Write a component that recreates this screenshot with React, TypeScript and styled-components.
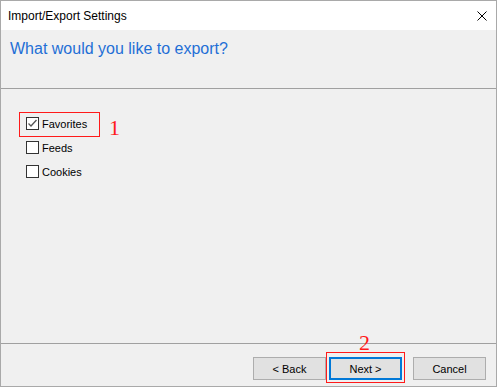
import React, { useState } from 'react';
import styled, { createGlobalStyle } from 'styled-components';

const GlobalStyle = createGlobalStyle`
  body {
    margin: 0;
    background: #ffffff;
  }
`;

const Window = styled.div`
  width: 497px;
  height: 387px;
  box-sizing: border-box;
  border: 1px solid #a9a9a9;
  background: #f0f0f0;
  display: flex;
  flex-direction: column;
  font-family: 'Liberation Sans', Arial, sans-serif;
  color: #000;
`;

const TitleBar = styled.div`
  height: 29px;
  flex-shrink: 0;
  background: #ffffff;
  display: flex;
  align-items: center;
  justify-content: space-between;
  padding: 0 8px 0 7px;
  font-size: 12px;
`;

const CloseButton = styled.div`
  width: 10px;
  height: 10px;
  display: flex;
  margin-top: 1px;
  margin-right: 1px;
`;

const Header = styled.div`
  height: 59px;
  flex-shrink: 0;
  box-sizing: border-box;
  padding: 10px 9px 0;
  border-bottom: 1px solid #a0a0a0;
  color: #1f6fd6;
  font-size: 16px;
`;

const Content = styled.div`
  flex: 1;
  padding: 28px 25px 0;
  display: flex;
  flex-direction: column;
  gap: 11px;
`;

const Row = styled.div`
  position: relative;
  display: flex;
  align-items: center;
  gap: 3px;
  height: 13px;
  font-size: 11px;
  cursor: default;
`;

const Box = styled.span`
  width: 13px;
  height: 13px;
  box-sizing: border-box;
  border: 1px solid #333333;
  background: #ffffff;
  display: flex;
  align-items: center;
  justify-content: center;
`;

const Highlight = styled.div<{ $w: number; $h: number; $l: number; $t: number }>`
  position: absolute;
  left: ${(p) => p.$l}px;
  top: ${(p) => p.$t}px;
  width: ${(p) => p.$w}px;
  height: ${(p) => p.$h}px;
  box-sizing: border-box;
  border: 1px solid #ff1a1a;
  pointer-events: none;
`;

const Marker = styled.span<{ $l: number; $t: number }>`
  position: absolute;
  left: ${(p) => p.$l}px;
  top: ${(p) => p.$t}px;
  font-family: 'Liberation Serif', 'Times New Roman', serif;
  font-size: 22px;
  line-height: 22px;
  color: #ff1a1a;
  pointer-events: none;
`;

const Footer = styled.div`
  height: 43px;
  flex-shrink: 0;
  box-sizing: border-box;
  border-top: 1px solid #a0a0a0;
  display: flex;
  justify-content: flex-end;
  padding: 13px 10px 0 0;
`;

const ButtonSlot = styled.div<{ $gap: number }>`
  position: relative;
  margin-left: ${(p) => p.$gap}px;
`;

const Button = styled.button<{ $primary?: boolean }>`
  width: 73px;
  height: 23px;
  box-sizing: border-box;
  padding: 0;
  background: #e1e1e1;
  border: ${(p) => (p.$primary ? '2px solid #0078d7' : '1px solid #adadad')};
  font-family: 'Liberation Sans', Arial, sans-serif;
  font-size: 11px;
  color: #000;
  outline: none;
`;

const items = ['Favorites', 'Feeds', 'Cookies'];

const App = () => {
  const [checked, setChecked] = useState<Record<string, boolean>>({
    Favorites: true,
  });

  return (
    <>
      <GlobalStyle />
      <Window>
        <TitleBar>
          <span>Import/Export Settings</span>
          <CloseButton>
            <svg width='10' height='10' viewBox='0 0 10 10'>
              <path d='M0.5 0.5 L9.5 9.5 M9.5 0.5 L0.5 9.5' stroke='#000' strokeWidth='1' />
            </svg>
          </CloseButton>
        </TitleBar>
        <Header>What would you like to export?</Header>
        <Content>
          {items.map((name) => (
            <Row
              key={name}
              onClick={() => setChecked({ ...checked, [name]: !checked[name] })}
            >
              <Box>
                {checked[name] && (
                  <svg width='11' height='11' viewBox='0 0 11 11'>
                    <path d='M1.5 5.5 L4 8 L9.5 2' fill='none' stroke='#555' strokeWidth='1.3' />
                  </svg>
                )}
              </Box>
              {name}
              {name === 'Favorites' && (
                <>
                  <Highlight $l={-7} $t={-5} $w={81} $h={25} />
                  <Marker $l={83} $t={0}>1</Marker>
                </>
              )}
            </Row>
          ))}
        </Content>
        <Footer>
          <ButtonSlot $gap={0}>
            <Button>&lt; Back</Button>
          </ButtonSlot>
          <ButtonSlot $gap={3}>
            <Button $primary>Next &gt;</Button>
            <Highlight $l={-3} $t={-5} $w={79} $h={31} />
            <Marker $l={30} $t={-25}>2</Marker>
          </ButtonSlot>
          <ButtonSlot $gap={11}>
            <Button>Cancel</Button>
          </ButtonSlot>
        </Footer>
      </Window>
    </>
  );
};

export default App;
